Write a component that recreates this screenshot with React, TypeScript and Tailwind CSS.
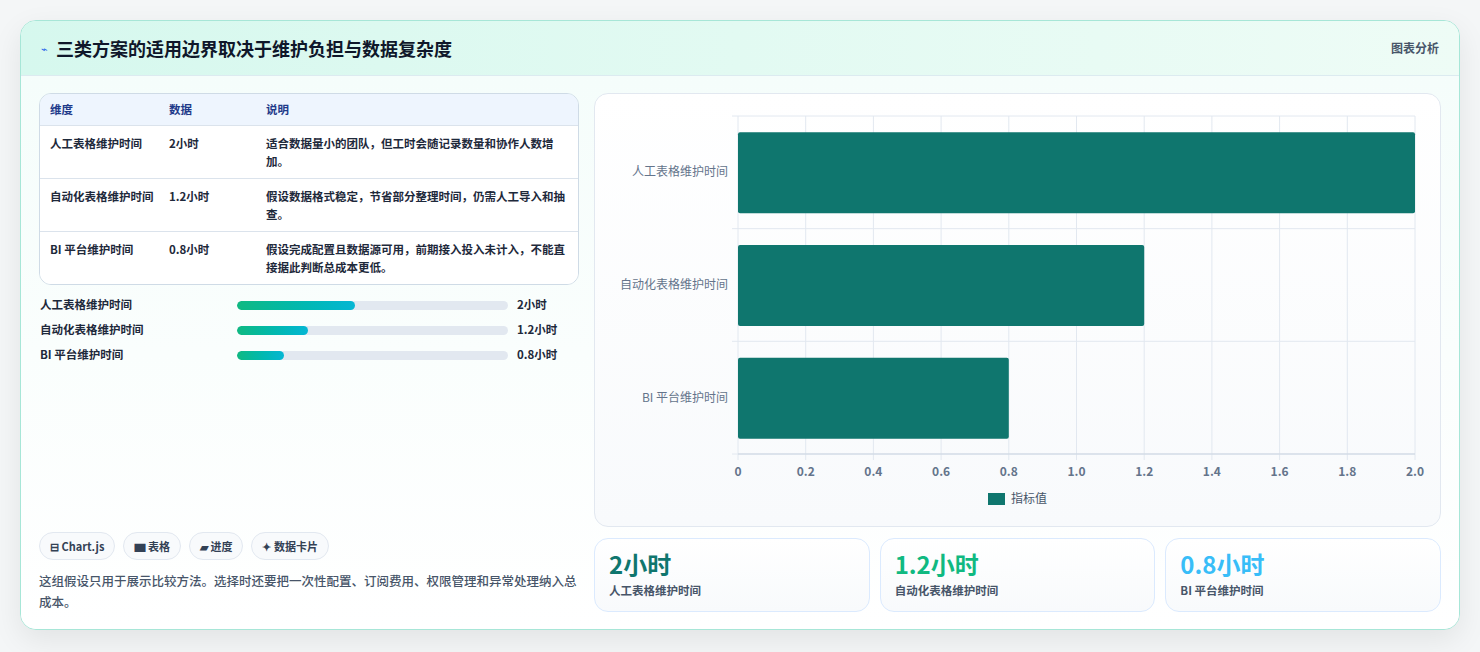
import React from "react";

const rows = [
  { k: "人工表格维护时间", v: "2小时", d: "适合数据量小的团队，但工时会随记录数量和协作人数增加。", n: 2 },
  { k: "自动化表格维护时间", v: "1.2小时", d: "假设数据格式稳定，节省部分整理时间，仍需人工导入和抽查。", n: 1.2 },
  { k: "BI 平台维护时间", v: "0.8小时", d: "假设完成配置且数据源可用，前期接入投入未计入，不能直接据此判断总成本更低。", n: 0.8 },
];

function Chart() {
  const x0 = 143, x1 = 820, y0 = 22, y1 = 360;
  const w = x1 - x0;
  const ticks = [0, 0.2, 0.4, 0.6, 0.8, 1, 1.2, 1.4, 1.6, 1.8, 2];
  const band = (y1 - y0) / 3;
  return (
    <svg width="845" height="433" className="block" style={{ fontFamily: "'Noto Sans CJK SC', sans-serif" }}>
      {ticks.map((t, i) => {
        const x = x0 + (w * t) / 2;
        return (
          <g key={i}>
            <line x1={x} y1={y0} x2={x} y2={y1 + 6} stroke="#e2e8f0" />
            <text x={x} y={382} textAnchor="middle" fontSize="12" fontWeight="600" fill="#64748b">{t === 1 ? "1.0" : t === 2 ? "2.0" : String(t)}</text>
          </g>
        );
      })}
      {[0, 1, 2, 3].map((i) => (
        <line key={i} x1={x0 - 6} x2={x1} y1={y0 + band * i} y2={y0 + band * i} stroke="#e2e8f0" />
      ))}
      <line x1={x0} y1={y1} x2={x1} y2={y1} stroke="#cbd5e1" />
      {rows.map((r, i) => {
        const cy = y0 + band * i + band / 2;
        return (
          <g key={i}>
            <rect x={x0} y={cy - 40} width={(w * r.n) / 2} height={81} rx={2} fill="#0f766e" />
            <text x={x0 - 10} y={cy + 4} textAnchor="end" fontSize="12" fill="#64748b">{r.k}</text>
          </g>
        );
      })}
      <rect x={393} y={399} width={17} height={12} fill="#0f766e" />
      <text x={416} y={409} fontSize="12" fill="#475569">指标值</text>
    </svg>
  );
}

export default function App() {
  const font = { fontFamily: "'Noto Sans CJK SC', 'Noto Sans', sans-serif" };
  return (
    <div className="w-[1480px] h-[652px] bg-[#f4f6f7] pt-[20px] pl-[20px]" style={font}>
      <div className="w-[1440px] h-[610px] rounded-[16px] border border-[#a7e6d7] bg-white overflow-hidden shadow-[0_10px_30px_rgba(0,0,0,0.08)] flex flex-col">
        <div className="h-[55px] shrink-0 flex items-center justify-between px-[20px] bg-gradient-to-r from-[#d6f8ee] to-[#eefcf6] border-b border-[#dcebf0]">
          <div className="flex items-center gap-[8px]">
            <span className="text-[#2563eb] text-[11px]">⌁</span>
            <span className="text-[18px] font-bold text-[#0f172a]">三类方案的适用边界取决于维护负担与数据复杂度</span>
          </div>
          <span className="text-[12px] font-semibold text-[#475569]">图表分析</span>
        </div>
        <div className="flex-1 flex gap-[15px] px-[18px] pt-[17px] pb-[18px] bg-gradient-to-b from-[#f5fdfb] to-white">
          <div className="w-[542px] flex flex-col">
            <div className="rounded-[12px] border border-[#cfdbe6] overflow-hidden text-[11.5px] text-[#1e293b] font-semibold">
              <div className="flex h-[32px] items-center bg-[#eef5fe] text-[#1e3a8a] border-b border-[#dbe3ec]">
                <div className="w-[129px] pl-[10px]">维度</div>
                <div className="w-[97px]">数据</div>
                <div className="flex-1">说明</div>
              </div>
              {rows.map((r, i) => (
                <div key={i} className={`flex py-[8px] leading-[18px] bg-white ${i < 2 ? "border-b border-[#dbe3ec]" : ""}`}>
                  <div className="w-[129px] pl-[10px] shrink-0">{r.k}</div>
                  <div className="w-[97px] shrink-0">{r.v}</div>
                  <div className="flex-1 pr-[10px]">{r.d}</div>
                </div>
              ))}
            </div>
            <div className="mt-[11px] flex flex-col gap-[7px] text-[11.5px] font-semibold text-[#1e293b]">
              {rows.map((r, i) => (
                <div key={i} className="flex items-center h-[18px]">
                  <div className="w-[198px] pl-[1px]">{r.k}</div>
                  <div className="w-[271px] h-[9px] rounded-full bg-[#e2e8f0] overflow-hidden">
                    <div className="h-full rounded-full bg-gradient-to-r from-[#10b981] to-[#06b6d4]" style={{ width: `${r.n * 21.8}%` }} />
                  </div>
                  <div className="ml-[9px]">{r.v}</div>
                </div>
              ))}
            </div>
            <div className="flex-1" />
            <div className="flex gap-[8px] text-[11px] font-semibold text-[#334155]">
              {["⊟ Chart.js", "▆ 表格", "▰ 进度", "✦ 数据卡片"].map((c) => (
                <span key={c} className="h-[28px] px-[10px] flex items-center rounded-full border border-[#e2e8f0] bg-[#f8fafc]">{c}</span>
              ))}
            </div>
            <p className="mt-[10px] text-[12.5px] leading-[21px] text-[#475569] font-medium">这组假设只用于展示比较方法。选择时还要把一次性配置、订阅费用、权限管理和异常处理纳入总成本。</p>
          </div>
          <div className="flex-1 flex flex-col gap-[11px]">
            <div className="h-[434px] rounded-[14px] border border-[#e2e8f0] bg-gradient-to-b from-white to-[#f8fafc] overflow-hidden">
              <Chart />
            </div>
            <div className="grid grid-cols-3 gap-[10px]">
              {rows.map((r, i) => (
                <div key={i} className="h-[74px] rounded-[14px] border border-[#dbeafe] bg-gradient-to-b from-white to-[#f8fafc] px-[14px] pt-[9px]">
                  <div className={`text-[24px] leading-[32px] font-bold ${["text-[#0f766e]", "text-[#10b981]", "text-[#38bdf8]"][i]}`}>{r.v}</div>
                  <div className="text-[11.5px] font-semibold text-[#475569] mt-[2px]">{r.k}</div>
                </div>
              ))}
            </div>
          </div>
        </div>
      </div>
    </div>
  );
}
